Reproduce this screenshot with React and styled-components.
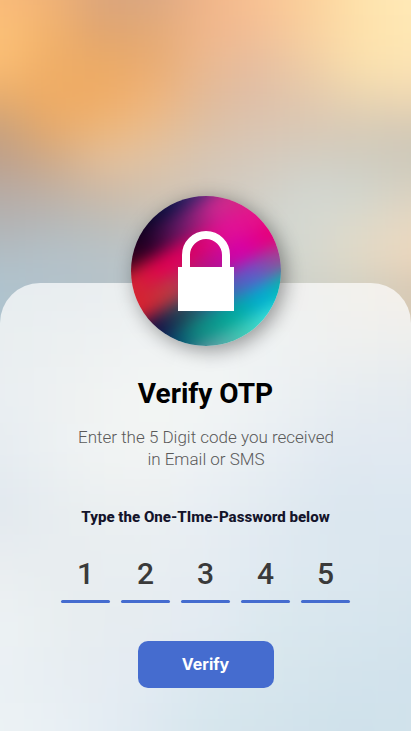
import React from "react";
import styled, { createGlobalStyle } from "styled-components";

const GlobalStyle = createGlobalStyle`
  * { box-sizing: border-box; }
  html, body { margin: 0; padding: 0; }
  body { font-family: Roboto, "Liberation Sans", sans-serif; overflow: hidden; }
`;

const Screen = styled.main`
  position: relative;
  isolation: isolate;
  width: 100%;
  height: 100vh;
  overflow: hidden;
  display: flex;
  flex-direction: column;
`;

/* Soft colour wash: stacked gradient bands melted together by a blur. */
const Wash = styled.div`
  position: absolute;
  inset: -${(p) => p.$bleed}px;
  z-index: -1;
  display: grid;
  grid-template-rows: ${(p) => p.$rows};
  transform: rotate(${(p) => p.$angle}deg);
  filter: blur(${(p) => p.$blur}px);
`;

const bandStops = (colors, bleed) =>
  colors
    .map((c, i) => {
      const t = i / (colors.length - 1);
      return `${c} calc(${bleed}px + (100% - ${bleed * 2}px) * ${t})`;
    })
    .join(", ");

const Band = styled.i`
  background: linear-gradient(90deg, ${(p) => bandStops(p.$colors, p.$bleed)});
`;

const Hero = styled.header`
  flex: none;
  height: 283px;
`;

const Sheet = styled.section`
  position: relative;
  flex: 1;
  display: flex;
  flex-direction: column;
  align-items: center;
  text-align: center;
`;

const SheetSurface = styled.div`
  position: absolute;
  inset: 0;
  z-index: -1;
  isolation: isolate;
  overflow: hidden;
  border-radius: 40px 40px 0 0;
`;

const Badge = styled.div`
  position: relative;
  isolation: isolate;
  flex: none;
  width: 150px;
  height: 150px;
  margin-top: -87px;
  border-radius: 50%;
  box-shadow: 4px 4px 20px rgba(0, 0, 0, 0.4);
  overflow: hidden;
  display: flex;
  justify-content: center;
  padding-top: 35px;
`;

const Title = styled.h1`
  margin: 30px 0 0;
  font-size: 28px;
  line-height: 36px;
  font-weight: 700;
  color: #000;
`;

const Hint = styled.p`
  margin: 14px 0 0;
  padding-left: 1px;
  width: 271px;
  font-size: 17px;
  line-height: 22px;
  font-weight: 300;
  color: #5a5a5a;
`;

const Label = styled.h2`
  margin: 37px 0 0;
  font-size: 15.1px;
  line-height: 20px;
  font-weight: 800;
  color: #14142b;
`;

const Code = styled.div`
  display: flex;
  gap: 11px;
  margin-top: 26px;
`;

const Digit = styled.div`
  width: 49px;
  height: 50px;
  font-size: 30px;
  line-height: 42px;
  font-weight: 500;
  color: #3a3a3a;
  display: flex;
  flex-direction: column;
  justify-content: space-between;

  &::after {
    content: "";
    height: 3px;
    border-radius: 2px;
    background: #456ccf;
  }
`;

const Button = styled.button`
  margin-top: 38px;
  width: 136px;
  height: 47px;
  padding: 0 0 2px;
  border: 0;
  border-radius: 10px;
  background: #456ccf;
  color: #fff;
  font-family: Inter, sans-serif;
  font-size: 16px;
  font-weight: 700;
`;

const backdrop = {
  bleed: 60,
  blur: 16,
  angle: 0,
  rows: "76px repeat(8, 32px) 1fr",
  colors: [
    "#fabb7a #f0b276 #dba57b #dba882 #f0b589 #f8c193 #fbd09b #fee2ab #ffe9b8",
    "#fcc178 #f2b26c #e0a570 #e4aa76 #f0b68b #f2bf97 #f8d09f #fee1ab #fee8b4",
    "#fabd74 #efae67 #ebaa66 #e9ac73 #eab991 #e7bea0 #efcda5 #fae0ad #fce4b4",
    "#e8ad6e #efac64 #efac66 #efb47b #e2ba99 #dfbfa8 #e3c9ad #ebd5b1 #f0d9b3",
    "#caa27c #e6aa6c #eeb679 #e9bc8e #dcc0a5 #dac4b1 #d9c8b5 #d8cbb7 #d6cab5",
    "#bda08c #cfaa88 #e3be99 #dfc3a5 #d6c5b4 #d5cabd #d2cec3 #d0cdc1 #cdc9bb",
    "#b6aaa4 #bfb0a4 #cdbaa7 #d2c2b0 #d0c7bb #d2cec5 #d2d6d0 #d1d5cd #d9d1c0",
    "#b2b3b4 #b5b8b9 #bdbeba #c5c3bc #cccbc5 #d1d3cd #d5d9d2 #ddd9ca #e7d8c1",
    "#b1bdc4 #b4c1c8 #b8c2c7 #bdc5c8 #c6cbca #ccd1ce #d5d8cf #e1d9c6 #ecd7bd",
    "#afc3ce #b2c2cb #b5c2c9 #bbc5c8 #c2c9c9 #cbcfcb #cfd1c9 #d3d1c3 #d8c9b4",
  ],
};

const surface = {
  bleed: 70,
  blur: 24,
  angle: 0,
  rows: "98px repeat(7, 1fr) 98px",
  colors: [
    "#e7edf0 #e8edf0 #ebeeef #eef0f0 #eef0ef #f2f1ed #f6f0e9",
    "#e9eef0 #ecf0f1 #eff2f3 #f0f3f4 #eff2f3 #eff0ef #eeefed",
    "#e9eef2 #eef1f2 #f3f5f3 #f2f5f4 #edf1f3 #e7edf1 #e4eaef",
    "#e6ecf1 #eef2f3 #f3f5f3 #eef2f4 #e8eef3 #e0e8f1 #e1e9f1",
    "#e1e8ef #e9eef0 #ecf0f2 #e8eef3 #e1eaf1 #dae6ef #dbe7f0",
    "#e9edf0 #e7edf0 #e9eef1 #e6edf3 #dfe9f1 #dbe7ef #dae6ee",
    "#edf2f4 #e7edef #e6ecf0 #e4ebf3 #dae8ee #d8e6ee #d5e4ed",
    "#ebf1f4 #e7edf2 #e4ebf3 #dbe8ef #d7e6ed #d3e3ec #d1e2ec",
    "#ecf2f4 #e8eff4 #e0eaf2 #d5e6ed #d3e3ec #cee1eb #d1e2eb",
  ],
};

const badge = {
  bleed: 50,
  blur: 8,
  angle: -29,
  rows: "62px repeat(5, 1fr) 62px",
  colors: [
    "#08001c #08001c #14144a #4a2e7a #d03080",
    "#300010 #240028 #6a1a68 #cc2690 #d42c80",
    "#d02830 #e00050 #d80068 #e01098 #e41488",
    "#d82030 #b83c44 #b01488 #d400ac #e80078",
    "#180c44 #204c58 #3c68a8 #6058cc #a04890",
    "#002a64 #108880 #00a898 #00acd4 #08c098",
    "#6a60a0 #6c98a4 #44c8b4 #40e8e0 #08d0c0",
  ],
};

function ColorWash({ mesh }) {
  return (
    <Wash
      aria-hidden="true"
      $bleed={mesh.bleed}
      $blur={mesh.blur}
      $angle={mesh.angle}
      $rows={mesh.rows}
    >
      {mesh.colors.map((row, i) => (
        <Band key={i} $bleed={mesh.bleed} $colors={row.split(" ")} />
      ))}
    </Wash>
  );
}

function LockIcon() {
  return (
    <svg width="56" height="80" viewBox="0 0 56 80" aria-hidden="true">
      <path d="M8 38V24a20 20 0 0 1 40 0v14" fill="none" stroke="#fff" strokeWidth="8" />
      <path d="M0 36h56v44H0z" fill="#fff" />
    </svg>
  );
}

export default function App() {
  return (
    <>
      <GlobalStyle />
      <Screen>
        <ColorWash mesh={backdrop} />
        <Hero />
        <Sheet>
          <SheetSurface>
            <ColorWash mesh={surface} />
          </SheetSurface>
          <Badge>
            <ColorWash mesh={badge} />
            <LockIcon />
          </Badge>
          <Title>Verify OTP</Title>
          <Hint>Enter the 5 Digit code you received in Email or SMS</Hint>
          <Label>Type the One-TIme-Password below</Label>
          <Code>
            {["1", "2", "3", "4", "5"].map((d) => (
              <Digit key={d}>{d}</Digit>
            ))}
          </Code>
          <Button type="button">Verify</Button>
        </Sheet>
      </Screen>
    </>
  );
}
